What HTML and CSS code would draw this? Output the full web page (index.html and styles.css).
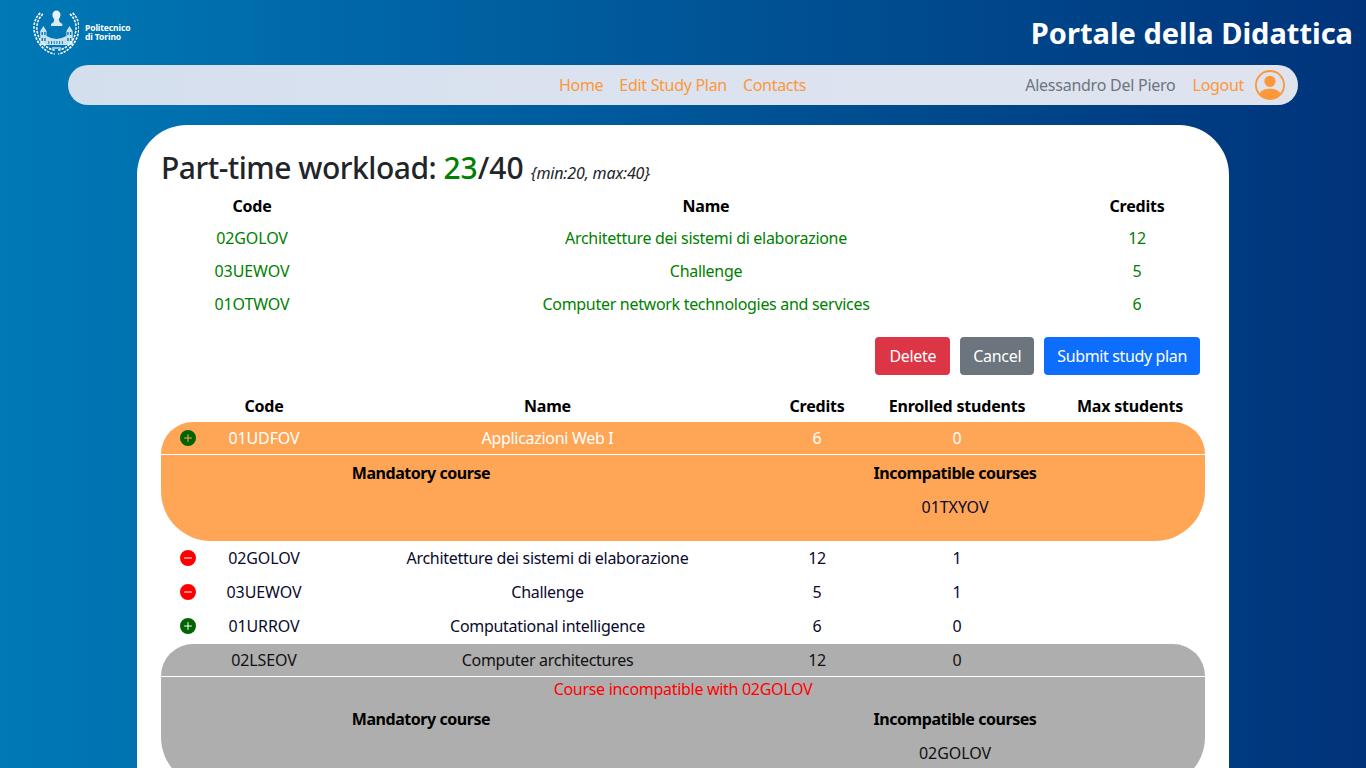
FILE: index.html
```html
<!DOCTYPE html>
<html lang="en">
<head>
<meta charset="utf-8">
<title>Portale della Didattica</title>
<link rel="stylesheet" href="styles.css">
</head>
<body>
<header class="top">
  <div class="logo">
    <svg class="crest" width="46" height="46" viewBox="-1 0 51 46" preserveAspectRatio="none" aria-hidden="true">
      <g class="wreath">
        <path d="M10 5C4 10 2 17 4 24c2 9 10 16 19 17"/>
        <path d="M7 4C0 10-1 18 1 25c3 10 11 18 22 20"/>
        <path d="M40 5c6 5 8 12 6 19-2 9-10 16-19 17"/>
        <path d="M43 4c7 6 8 14 6 21-3 10-11 18-22 20"/>
      </g>
      <g fill="#fff">
        <circle cx="25" cy="6" r="4.500" opacity=".9"/>
        <path opacity=".85" d="M22.500 10h5l1 3 3 2v2H19v-2l3-2z"/>
        <path opacity=".78" d="M7 36V22l3.500-5 3.500 5v5l5 2 6 1 6-1 5-2v-5l3.500-5 3.500 5v14z"/>
      </g>
      <g fill="#0075b2">
        <rect x="8.500" y="23" width="1.500" height="3"/><rect x="11.500" y="23" width="1.500" height="3"/>
        <rect x="37" y="23" width="1.500" height="3"/><rect x="40" y="23" width="1.500" height="3"/>
        <rect x="8.500" y="29" width="1.500" height="3"/><rect x="11.500" y="29" width="1.500" height="3"/>
        <rect x="37" y="29" width="1.500" height="3"/><rect x="40" y="29" width="1.500" height="3"/>
        <rect x="16" y="32" width="1" height="3"/><rect x="19" y="32" width="1" height="3"/><rect x="22" y="32" width="1" height="3"/><rect x="25" y="32" width="1" height="3"/><rect x="28" y="32" width="1" height="3"/><rect x="31" y="32" width="1" height="3"/>
      </g>
      <rect x="20" y="38" width="10" height="2" fill="#fff" opacity=".55"/>
    </svg>
    <div class="logo-text">Politecnico<br>di Torino</div>
  </div>
  <h1 class="title">Portale della Didattica</h1>
</header>

<nav class="navbar">
  <div class="nav-links">
    <a href="#">Home</a>
    <a href="#">Edit Study Plan</a>
    <a href="#">Contacts</a>
  </div>
  <div class="nav-user">
    <span class="user-name">Alessandro Del Piero</span>
    <a href="#">Logout</a>
    <svg class="avatar" width="30" height="30" viewBox="0 0 16 16" fill="#fd973b" aria-hidden="true">
      <path d="M11 6a3 3 0 1 1-6 0 3 3 0 0 1 6 0z"/>
      <path fill-rule="evenodd" d="M0 8a8 8 0 1 1 16 0A8 8 0 0 1 0 8zm8-7a7 7 0 0 0-5.468 11.37C3.242 11.226 4.805 10 8 10s4.757 1.225 5.468 2.37A7 7 0 0 0 8 1z"/>
    </svg>
  </div>
</nav>

<main class="card">
  <h2 class="workload">Part-time workload: <span class="num"><span class="ok">23</span>/40</span> <small>{min:20, max:40}</small></h2>

  <table class="plan">
    <colgroup><col class="p1"><col class="p2"><col class="p3"></colgroup>
    <thead><tr><th>Code</th><th>Name</th><th>Credits</th></tr></thead>
    <tbody>
      <tr><td>02GOLOV</td><td>Architetture dei sistemi di elaborazione</td><td>12</td></tr>
      <tr><td>03UEWOV</td><td>Challenge</td><td>5</td></tr>
      <tr><td>01OTWOV</td><td>Computer network technologies and services</td><td>6</td></tr>
    </tbody>
  </table>

  <div class="actions">
    <button class="btn red">Delete</button>
    <button class="btn grey">Cancel</button>
    <button class="btn blue">Submit study plan</button>
  </div>

  <table class="courses">
    <colgroup><col class="c0"><col class="c1"><col class="c2"><col class="c3"><col class="c4"><col class="c5"></colgroup>
    <thead>
      <tr><th></th><th>Code</th><th>Name</th><th>Credits</th><th>Enrolled students</th><th>Max students</th></tr>
    </thead>
    <tbody>
      <tr class="row orange top-row">
        <td class="ic"><svg class="dot add" viewBox="0 0 16 16" aria-hidden="true"><path fill-rule="evenodd" d="M16 8A8 8 0 1 1 0 8a8 8 0 0 1 16 0zM8.500 4.500a.5.5 0 0 0-1 0v3h-3a.5.5 0 0 0 0 1h3v3a.5.5 0 0 0 1 0v-3h3a.5.5 0 0 0 0-1h-3v-3z"/></svg></td><td>01UDFOV</td><td>Applicazioni Web I</td><td>6</td><td>0</td><td></td>
      </tr>
      <tr class="detail orange">
        <td colspan="6">
          <div class="info">
            <div><b>Mandatory course</b></div>
            <div><b>Incompatible courses</b><p>01TXYOV</p></div>
          </div>
        </td>
      </tr>
      <tr class="row"><td class="ic"><svg class="dot del" viewBox="0 0 16 16" aria-hidden="true"><path fill-rule="evenodd" d="M16 8A8 8 0 1 1 0 8a8 8 0 0 1 16 0zM4.500 7.500a.5.5 0 0 0 0 1h7a.5.5 0 0 0 0-1h-7z"/></svg></td><td>02GOLOV</td><td>Architetture dei sistemi di elaborazione</td><td>12</td><td>1</td><td></td></tr>
      <tr class="row"><td class="ic"><svg class="dot del" viewBox="0 0 16 16" aria-hidden="true"><path fill-rule="evenodd" d="M16 8A8 8 0 1 1 0 8a8 8 0 0 1 16 0zM4.500 7.500a.5.5 0 0 0 0 1h7a.5.5 0 0 0 0-1h-7z"/></svg></td><td>03UEWOV</td><td>Challenge</td><td>5</td><td>1</td><td></td></tr>
      <tr class="row before-grey"><td class="ic"><svg class="dot add" viewBox="0 0 16 16" aria-hidden="true"><path fill-rule="evenodd" d="M16 8A8 8 0 1 1 0 8a8 8 0 0 1 16 0zM8.500 4.500a.5.5 0 0 0-1 0v3h-3a.5.5 0 0 0 0 1h3v3a.5.5 0 0 0 1 0v-3h3a.5.5 0 0 0 0-1h-3v-3z"/></svg></td><td>01URROV</td><td>Computational intelligence</td><td>6</td><td>0</td><td></td></tr>
      <tr class="row grey-row top-row">
        <td></td><td>02LSEOV</td><td>Computer architectures</td><td>12</td><td>0</td><td></td>
      </tr>
      <tr class="detail grey-row">
        <td colspan="6">
          <div class="warn">Course incompatible with 02GOLOV</div>
          <div class="info">
            <div><b>Mandatory course</b></div>
            <div><b>Incompatible courses</b><p>02GOLOV</p></div>
          </div>
        </td>
      </tr>
    </tbody>
  </table>
</main>
</body>
</html>
```
FILE: styles.css
```css
* { box-sizing: border-box; }
html, body { height: 100%; }
body {
  margin: 0;
  overflow: hidden;
  background: linear-gradient(90deg, #0079b6 0%, #00337a 100%);
  font-family: "Noto Sans", "Open Sans", sans-serif;
  font-size: 16px;
  line-height: 24px;
  letter-spacing: -.3px;
  color: #212529;
}
.top {
  display: flex;
  justify-content: space-between;
  align-items: flex-start;
  height: 65px;
  padding: 9px 13px 0 33px;
}
.logo { display: flex; align-items: center; gap: 6px; }
.crest { display: block; }
.wreath { fill: none; stroke: #fff; stroke-width: 1.7; stroke-dasharray: 2.6 1.2; }
.logo-text { color: #fff; font-size: 8.500px; line-height: 9px; font-weight: 700; letter-spacing: -.1px; }
.title {
  margin: 5px 0 0;
  color: #fff;
  font-size: 29px;
  line-height: 38px;
  font-weight: 700;
  letter-spacing: 0;
}
.navbar {
  position: relative;
  display: flex;
  justify-content: flex-end;
  align-items: center;
  height: 40px;
  margin: 0 68px;
  padding-right: 13px;
  border-radius: 20px;
  background: linear-gradient(90deg, #d4dfee 0%, #dce3f0 50%, #dee3ee 100%);
}
.navbar a { color: #fd973b; text-decoration: none; }
.nav-links {
  position: absolute;
  left: 491px;
  display: flex;
  gap: 16px;
}
.nav-user { display: flex; align-items: center; gap: 16px; }
.user-name { color: #6c757d; letter-spacing: -.25px; margin-right: 1px; }
.avatar { display: block; margin-left: -5px; }
.card {
  width: 1092px;
  min-height: 800px;
  margin: 20px 0 0 137px;
  padding: 24px;
  border-radius: 50px;
  background: #fff;
}
.workload {
  margin: 0 0 2px;
  font-size: 30px;
  line-height: 38px;
  font-weight: 500;
  letter-spacing: -.5px;
}
.num { letter-spacing: 0; }
.ok { color: #008000; }
.workload small { font-size: 16px; line-height: 1; font-style: italic; font-weight: 400; letter-spacing: -.15px; }
table { border-collapse: separate; border-spacing: 0; table-layout: fixed; width: 1044px; text-align: center; }
.plan { color: #008000; }
th { letter-spacing: -.2px; }
.plan th { color: #000; height: 32px; padding: 2px 0 0; }
.plan td { height: 33px; padding: 0; }
.plan td:first-child, .courses td:nth-child(2) { letter-spacing: -.1px; }
.p1 { width: 182px; } .p2 { width: 726px; } .p3 { width: 136px; }
.actions { display: flex; justify-content: flex-end; gap: 10px; margin: 17px 5px 15px 0; }
.btn {
  height: 38px;
  padding: 0 13px;
  border: 0;
  border-radius: 4px;
  color: #fff;
  font: inherit;
  letter-spacing: -.3px;
}
.red { background: #dc3545; padding: 0 14px; }
.grey { background: #6c757d; }
.blue { background: #0d6efd; letter-spacing: -.36px; }
.c0 { width: 47px; } .c1 { width: 112px; } .c2 { width: 455px; } .c3 { width: 84px; } .c4 { width: 196px; } .c5 { width: 150px; }
.courses th { color: #000; height: 32px; padding: 0; }
.row td { height: 34px; padding: 0; color: #0a0a2e; }
.row.before-grey td { height: 35px; padding-bottom: 1px; }
.row td.ic { padding-left: 19px; text-align: left; }
.dot { display: block; width: 16px; height: 16px; }
.add { fill: #006400; }
.del { fill: #f00; }
.orange { background: #ffa556; }
.row.orange td { color: #fff; }
.grey-row { background: #aeaeae; }
.row.grey-row td { color: #111; }
.row.top-row td { height: 33px; border-bottom: 1px solid #fff; }
.top-row td:first-child { border-top-left-radius: 32px; }
.top-row td:last-child { border-top-right-radius: 32px; }
.detail td { height: 86px; padding: 6px 0 0; vertical-align: top; border-bottom-left-radius: 50px; border-bottom-right-radius: 50px; }
.detail.grey-row td { height: 110px; }
.info { display: grid; grid-template-columns: 520px 500px; gap: 24px; color: #000; }
.info b { letter-spacing: -.45px; }
.info p { margin: 10px 0 0; color: #0a0a2e; letter-spacing: -.05px; }
.warn { color: #f00; line-height: 12px; margin-bottom: 12px; }
.grey-row .info p { color: #111; }
```
